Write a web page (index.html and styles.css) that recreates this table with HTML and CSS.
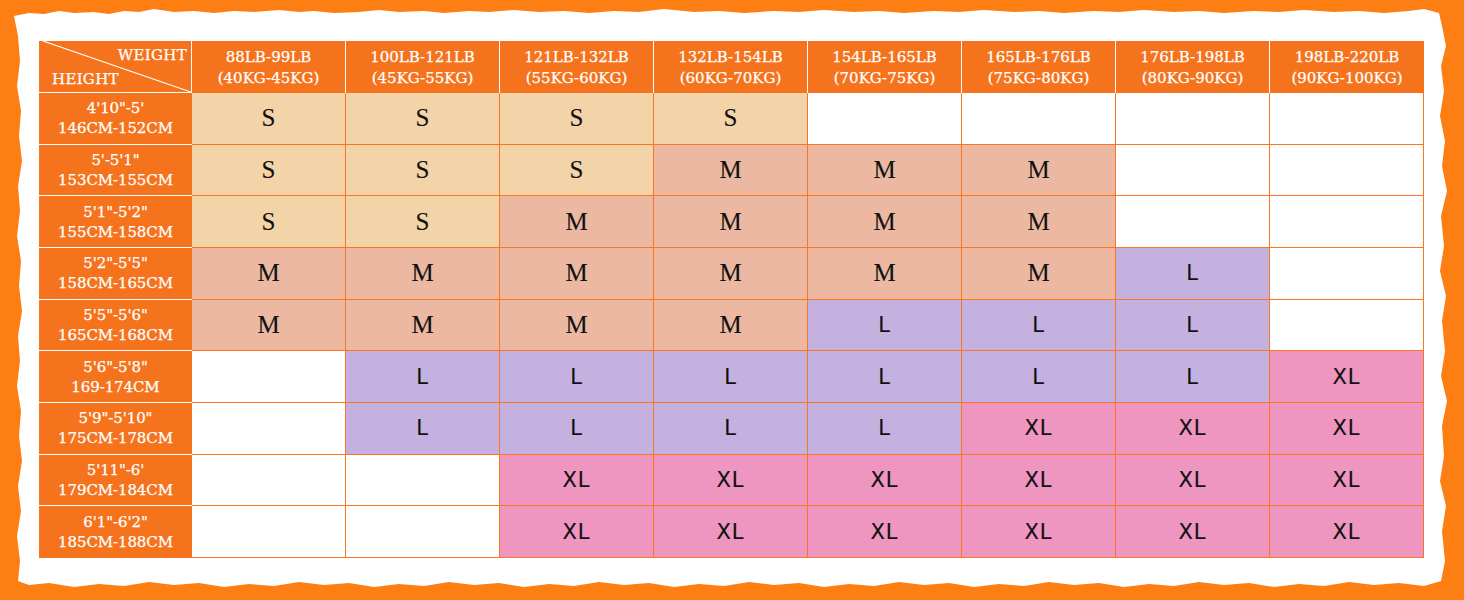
FILE: index.html
```html
<!DOCTYPE html>
<html lang="en">
<head>
<meta charset="utf-8">
<title>Size Chart</title>
<link rel="stylesheet" href="styles.css">
</head>
<body>
<div class="card">
  <div class="chart">
    <div class="corner">
      <svg class="diag" viewBox="0 0 153 52" preserveAspectRatio="none"><line x1="4" y1="0" x2="153" y2="52" stroke="#fff" stroke-width="1.2"/></svg>
      <span class="c-weight">WEIGHT</span>
      <span class="c-height">HEIGHT</span>
    </div>
    <div class="hd">88LB-99LB<br>(40KG-45KG)</div>
    <div class="hd">100LB-121LB<br>(45KG-55KG)</div>
    <div class="hd">121LB-132LB<br>(55KG-60KG)</div>
    <div class="hd">132LB-154LB<br>(60KG-70KG)</div>
    <div class="hd">154LB-165LB<br>(70KG-75KG)</div>
    <div class="hd">165LB-176LB<br>(75KG-80KG)</div>
    <div class="hd">176LB-198LB<br>(80KG-90KG)</div>
    <div class="hd last">198LB-220LB<br>(90KG-100KG)</div>

    <div class="lb">4'10"-5'<br>146CM-152CM</div>
    <div class="c s">S</div><div class="c s">S</div><div class="c s">S</div><div class="c s">S</div><div class="c"></div><div class="c"></div><div class="c"></div><div class="c"></div>

    <div class="lb">5'-5'1"<br>153CM-155CM</div>
    <div class="c s">S</div><div class="c s">S</div><div class="c s">S</div><div class="c m">M</div><div class="c m">M</div><div class="c m">M</div><div class="c"></div><div class="c"></div>

    <div class="lb">5'1"-5'2"<br>155CM-158CM</div>
    <div class="c s">S</div><div class="c s">S</div><div class="c m">M</div><div class="c m">M</div><div class="c m">M</div><div class="c m">M</div><div class="c"></div><div class="c"></div>

    <div class="lb">5'2"-5'5"<br>158CM-165CM</div>
    <div class="c m">M</div><div class="c m">M</div><div class="c m">M</div><div class="c m">M</div><div class="c m">M</div><div class="c m">M</div><div class="c l">L</div><div class="c"></div>

    <div class="lb">5'5"-5'6"<br>165CM-168CM</div>
    <div class="c m">M</div><div class="c m">M</div><div class="c m">M</div><div class="c m">M</div><div class="c l">L</div><div class="c l">L</div><div class="c l">L</div><div class="c"></div>

    <div class="lb">5'6"-5'8"<br>169-174CM</div>
    <div class="c"></div><div class="c l">L</div><div class="c l">L</div><div class="c l">L</div><div class="c l">L</div><div class="c l">L</div><div class="c l">L</div><div class="c xl">XL</div>

    <div class="lb">5'9"-5'10"<br>175CM-178CM</div>
    <div class="c"></div><div class="c l">L</div><div class="c l">L</div><div class="c l">L</div><div class="c l">L</div><div class="c xl">XL</div><div class="c xl">XL</div><div class="c xl">XL</div>

    <div class="lb">5'11"-6'<br>179CM-184CM</div>
    <div class="c"></div><div class="c"></div><div class="c xl">XL</div><div class="c xl">XL</div><div class="c xl">XL</div><div class="c xl">XL</div><div class="c xl">XL</div><div class="c xl">XL</div>

    <div class="lb last">6'1"-6'2"<br>185CM-188CM</div>
    <div class="c"></div><div class="c"></div><div class="c xl">XL</div><div class="c xl">XL</div><div class="c xl">XL</div><div class="c xl">XL</div><div class="c xl">XL</div><div class="c xl">XL</div>
  </div>
</div>
</body>
</html>
```

FILE: styles.css
```css
* { box-sizing: border-box; }

html, body {
  margin: 0;
  padding: 0;
}

body {
  width: 1464px;
  height: 600px;
  background: #fd7f14;
  overflow: hidden;
  padding: 6px 0 0 14px;
}

.card {
  width: 1438px;
  height: 588px;
  background: #ffffff;
  padding: 35px 0 0 25px;
  clip-path: polygon(
    0px 10px, 15px 7px, 30px 8px, 45px 5px, 60px 7px, 80px 6px, 95px 8px, 110px 5px, 125px 6px, 140px 3px,
    160px 6px, 180px 5px, 200px 7px, 220px 5px, 240px 6px, 265px 4px, 285px 6px, 300px 5px, 320px 7px, 345px 6px,
    365px 4px, 385px 6px, 410px 5px, 430px 7px, 455px 5px, 475px 6px, 500px 4px, 525px 6px, 550px 5px, 575px 7px,
    600px 5px, 625px 6px, 650px 3px, 680px 6px, 705px 5px, 730px 7px, 760px 5px, 785px 6px, 810px 4px, 840px 6px,
    865px 5px, 890px 7px, 920px 5px, 945px 6px, 970px 4px, 1000px 6px, 1025px 5px, 1050px 7px, 1080px 5px,
    1105px 6px, 1130px 4px, 1160px 6px, 1185px 5px, 1210px 7px, 1240px 5px, 1265px 6px, 1290px 4px, 1320px 6px,
    1345px 5px, 1370px 7px, 1395px 5px, 1410px 3px, 1425px 7px,
    1428px 20px, 1432px 40px, 1427px 60px, 1430px 85px, 1426px 110px, 1431px 135px, 1428px 160px, 1433px 185px,
    1427px 210px, 1430px 240px, 1426px 265px, 1432px 290px, 1428px 315px, 1431px 345px, 1427px 370px,
    1433px 395px, 1428px 420px, 1430px 450px, 1426px 475px, 1432px 500px, 1428px 525px, 1431px 555px, 1427px 575px,
    1410px 580px, 1385px 577px, 1360px 579px, 1335px 576px, 1310px 580px, 1285px 578px, 1260px 581px, 1235px 577px,
    1210px 579px, 1185px 576px, 1160px 580px, 1135px 578px, 1110px 581px, 1085px 577px, 1060px 579px, 1035px 576px,
    1010px 580px, 985px 578px, 960px 581px, 935px 577px, 910px 579px, 885px 576px, 860px 580px, 835px 578px,
    810px 581px, 785px 577px, 760px 579px, 735px 576px, 710px 580px, 685px 578px, 660px 581px, 635px 577px,
    610px 579px, 585px 576px, 560px 580px, 535px 578px, 510px 581px, 485px 577px, 460px 579px, 435px 576px,
    410px 580px, 385px 578px, 360px 581px, 335px 577px, 310px 579px, 285px 576px, 260px 580px, 235px 578px,
    210px 581px, 185px 577px, 160px 579px, 135px 576px, 110px 580px, 85px 578px, 60px 581px, 35px 577px,
    15px 579px, 4px 575px,
    6px 555px, 3px 530px, 7px 505px, 4px 480px, 8px 455px, 5px 430px, 7px 405px, 3px 380px, 6px 355px,
    4px 330px, 8px 305px, 5px 280px, 7px 255px, 3px 230px, 6px 205px, 4px 180px, 8px 155px, 5px 130px,
    7px 105px, 3px 80px, 6px 55px, 4px 30px
  );
}

.chart {
  width: 1385px;
  height: 517px;
  display: grid;
  grid-template-columns: 153px repeat(8, 1fr);
  grid-template-rows: 52px repeat(9, 1fr);
  font-family: "DejaVu Serif", "Liberation Serif", serif;
}

.corner {
  position: relative;
  background: #f5731d;
  border-right: 1px solid #ffffff;
  border-bottom: 1px solid #ffffff;
  color: #ffffff;
  font-size: 15px;
  letter-spacing: 0.3px;
  -webkit-text-stroke: 0.25px #ffffff;
  display: flex;
  flex-direction: column;
  justify-content: space-between;
  padding: 4px 4px 3px 13px;
}

.diag {
  position: absolute;
  left: 0;
  top: 0;
  width: 100%;
  height: 100%;
}

.c-weight { align-self: flex-end; line-height: 20px; }
.c-height { align-self: flex-start; line-height: 20px; }

.hd {
  background: #f5731d;
  color: #ffffff;
  border-right: 1px solid #ffffff;
  font-size: 15px;
  line-height: 21px;
  -webkit-text-stroke: 0.25px #ffffff;
  text-align: center;
  display: flex;
  align-items: center;
  justify-content: center;
  padding-top: 1px;
}

.hd.last { border-right: none; }

.lb {
  background: #f5731d;
  color: #ffffff;
  border-bottom: 1px solid #ffffff;
  font-size: 15px;
  line-height: 20px;
  letter-spacing: -0.1px;
  -webkit-text-stroke: 0.25px #ffffff;
  text-align: center;
  display: flex;
  align-items: center;
  justify-content: center;
}

.lb.last { border-bottom: none; }

.c {
  background: #ffffff;
  border-right: 1px solid #fa7620;
  border-bottom: 1px solid #fa7620;
  color: #111111;
  display: flex;
  align-items: center;
  justify-content: center;
}

.s, .m {
  font-family: "Liberation Serif", "DejaVu Serif", serif;
  font-size: 25px;
  -webkit-text-stroke: 0.1px #111111;
}

.l, .xl {
  font-family: "DejaVu Sans", "Liberation Sans", sans-serif;
  font-size: 21px;
  letter-spacing: 1px;
  -webkit-text-stroke: 0.15px #111111;
}

.s { background: #f3d3a8; }
.m { background: #ecb8a2; }
.l { background: #c4b1df; }
.xl { background: #ee95c0; }
```
